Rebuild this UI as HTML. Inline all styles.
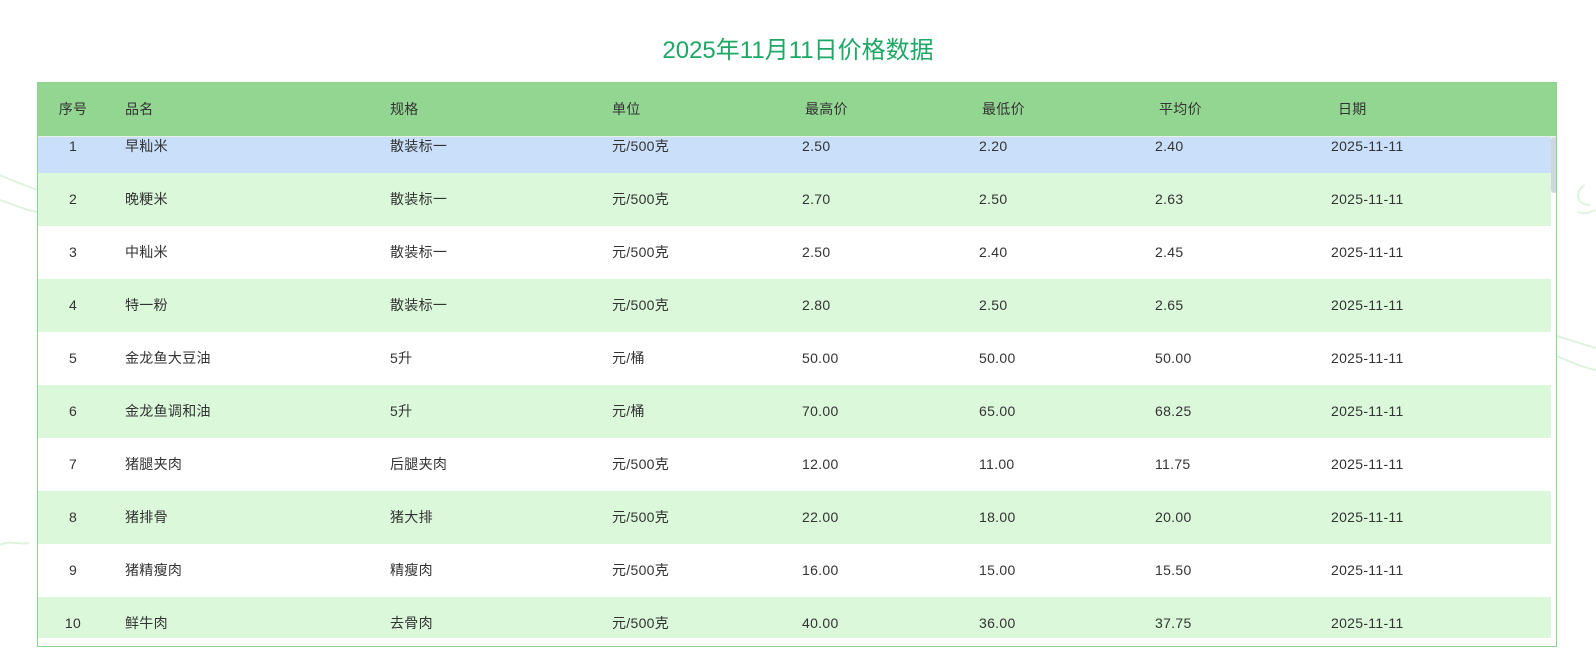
<!DOCTYPE html>
<html><head><meta charset="utf-8"><style>
body{margin:0;width:1596px;height:651px;background:#fff;position:relative;overflow:hidden;font-family:"Liberation Sans","Noto Sans CJK SC",sans-serif;color:#333;font-size:14px}
.title{position:absolute;top:30px;left:0;width:1596px;text-align:center;font-size:24px;color:#1ea865}
.box{position:absolute;left:37px;top:82px;width:1518px;height:563px;border:1px solid #8fd18e;overflow:hidden;background:#fff}
.hd{position:absolute;left:0;top:0;width:1518px;height:53px;background:#93d692;z-index:2;border-bottom:1px solid #e6f2e6}
.rows{position:absolute;left:0;top:37px;width:1513px}
.r{height:53px;position:relative}
.g{background:#dbf8da}.sel{background:#cadffa}
.c{position:absolute;top:0;line-height:53px;white-space:nowrap;letter-spacing:0.3px}
.n{width:70px;text-align:center;left:0}
.sb{position:absolute;left:1513px;top:54px;width:6px;height:56px;background:#cfd6dc;border-radius:3px;z-index:3}
</style></head><body>
<svg style="position:absolute;left:0;top:0" width="1596" height="651" fill="none" stroke="#dff3df" stroke-width="2">
<path d="M0 175 C10 180 25 185 37 190"/><path d="M0 200 C15 205 25 210 37 212"/>
<path d="M0 545 C10 540 20 545 29 543"/>
<path d="M1585 185 C1575 190 1575 205 1590 205 M1578 212 C1585 215 1590 212 1596 210"/>
<path d="M1557 336 C1570 340 1585 345 1596 348 M1557 356 C1570 362 1585 368 1596 370"/>
</svg>
<div class="title">2025年11月11日价格数据</div>
<div class="box">
<div class="hd">
<span class="c n">序号</span><span class="c" style="left:87px">品名</span><span class="c" style="left:352px">规格</span><span class="c" style="left:574px">单位</span><span class="c" style="left:767px">最高价</span><span class="c" style="left:944px">最低价</span><span class="c" style="left:1121px">平均价</span><span class="c" style="left:1300px">日期</span>
</div>
<div class="sb"></div>
<div class="rows">
<div class="r sel"><span class="c n">1</span><span class="c" style="left:87px">早籼米</span><span class="c" style="left:352px">散装标一</span><span class="c" style="left:574px">元/500克</span><span class="c" style="left:764px">2.50</span><span class="c" style="left:941px">2.20</span><span class="c" style="left:1117px">2.40</span><span class="c" style="left:1293px">2025-11-11</span></div>
<div class="r g"><span class="c n">2</span><span class="c" style="left:87px">晚粳米</span><span class="c" style="left:352px">散装标一</span><span class="c" style="left:574px">元/500克</span><span class="c" style="left:764px">2.70</span><span class="c" style="left:941px">2.50</span><span class="c" style="left:1117px">2.63</span><span class="c" style="left:1293px">2025-11-11</span></div>
<div class="r"><span class="c n">3</span><span class="c" style="left:87px">中籼米</span><span class="c" style="left:352px">散装标一</span><span class="c" style="left:574px">元/500克</span><span class="c" style="left:764px">2.50</span><span class="c" style="left:941px">2.40</span><span class="c" style="left:1117px">2.45</span><span class="c" style="left:1293px">2025-11-11</span></div>
<div class="r g"><span class="c n">4</span><span class="c" style="left:87px">特一粉</span><span class="c" style="left:352px">散装标一</span><span class="c" style="left:574px">元/500克</span><span class="c" style="left:764px">2.80</span><span class="c" style="left:941px">2.50</span><span class="c" style="left:1117px">2.65</span><span class="c" style="left:1293px">2025-11-11</span></div>
<div class="r"><span class="c n">5</span><span class="c" style="left:87px">金龙鱼大豆油</span><span class="c" style="left:352px">5升</span><span class="c" style="left:574px">元/桶</span><span class="c" style="left:764px">50.00</span><span class="c" style="left:941px">50.00</span><span class="c" style="left:1117px">50.00</span><span class="c" style="left:1293px">2025-11-11</span></div>
<div class="r g"><span class="c n">6</span><span class="c" style="left:87px">金龙鱼调和油</span><span class="c" style="left:352px">5升</span><span class="c" style="left:574px">元/桶</span><span class="c" style="left:764px">70.00</span><span class="c" style="left:941px">65.00</span><span class="c" style="left:1117px">68.25</span><span class="c" style="left:1293px">2025-11-11</span></div>
<div class="r"><span class="c n">7</span><span class="c" style="left:87px">猪腿夹肉</span><span class="c" style="left:352px">后腿夹肉</span><span class="c" style="left:574px">元/500克</span><span class="c" style="left:764px">12.00</span><span class="c" style="left:941px">11.00</span><span class="c" style="left:1117px">11.75</span><span class="c" style="left:1293px">2025-11-11</span></div>
<div class="r g"><span class="c n">8</span><span class="c" style="left:87px">猪排骨</span><span class="c" style="left:352px">猪大排</span><span class="c" style="left:574px">元/500克</span><span class="c" style="left:764px">22.00</span><span class="c" style="left:941px">18.00</span><span class="c" style="left:1117px">20.00</span><span class="c" style="left:1293px">2025-11-11</span></div>
<div class="r"><span class="c n">9</span><span class="c" style="left:87px">猪精瘦肉</span><span class="c" style="left:352px">精瘦肉</span><span class="c" style="left:574px">元/500克</span><span class="c" style="left:764px">16.00</span><span class="c" style="left:941px">15.00</span><span class="c" style="left:1117px">15.50</span><span class="c" style="left:1293px">2025-11-11</span></div>
<div class="r g" style="height:41px"><span class="c n">10</span><span class="c" style="left:87px">鲜牛肉</span><span class="c" style="left:352px">去骨肉</span><span class="c" style="left:574px">元/500克</span><span class="c" style="left:764px">40.00</span><span class="c" style="left:941px">36.00</span><span class="c" style="left:1117px">37.75</span><span class="c" style="left:1293px">2025-11-11</span></div>
</div>
</div>
</body></html>
